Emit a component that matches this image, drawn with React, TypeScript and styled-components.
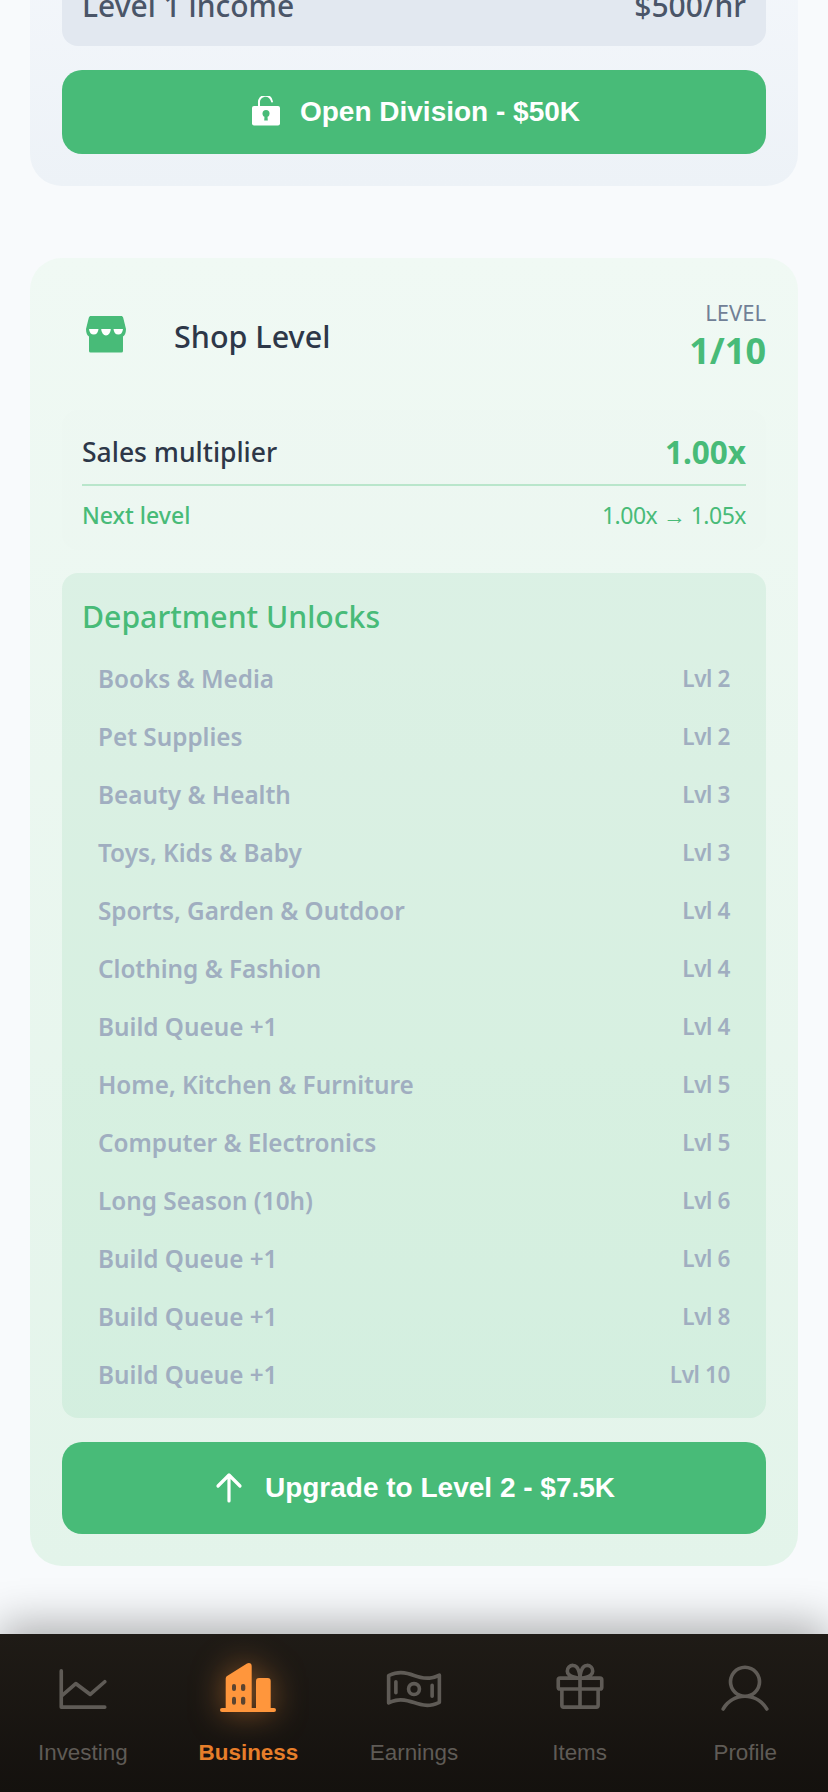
import React from "react";
import styled, { createGlobalStyle } from "styled-components";
import { PiChartLine, PiMoneyWavy, PiGift, PiUser } from "react-icons/pi";

const Global = createGlobalStyle`
  html, body { margin: 0; padding: 0; background: #f8fafc; }
  * { box-sizing: border-box; }
`;

const Screen = styled.div`
  width: 828px;
  height: 1792px;
  overflow: hidden;
  display: flex;
  flex-direction: column;
  font-family: "Noto Sans", sans-serif;
  background: #f8fafc;
`;
const Scroller = styled.main`
  flex: 1;
  min-height: 0;
  overflow: hidden;
  padding: 0 30px;
  display: flex;
  flex-direction: column;
  gap: 72px;
`;
const LockedCard = styled.section`
  margin-top: -100px;
  border-radius: 0 0 32px 32px;
  padding: 0 32px 32px;
  background: linear-gradient(180deg, #f5f8fc, #edf2f7);
`;
const IncomeBox = styled.div`
  height: 146px;
  padding: 0 20px 20px;
  border-radius: 16px;
  background: #e2e8f0;
  display: flex;
  justify-content: space-between;
  align-items: flex-end;
  font-size: 30px;
  font-weight: 500;
  color: #4a5568;
  margin-bottom: 24px;
`;
const ActionButton = styled.button<{ $h: number }>`
  width: 100%;
  height: ${(p) => p.$h}px;
  border: 0;
  border-radius: 20px;
  background: #48bb78;
  color: #fff;
  display: flex;
  align-items: center;
  justify-content: center;
  gap: 20px;
  font-family: "Liberation Sans", Arial, sans-serif;
  font-size: 28px;
  font-weight: 700;
  padding: 0;
`;
const ShopCard = styled.section`
  border-radius: 32px;
  padding: 32px;
  background: linear-gradient(180deg, #f0f9f4, #e3f4ea);
`;
const Header = styled.header`
  display: flex;
  justify-content: space-between;
  align-items: center;
  height: 94px;
  margin-bottom: 26px;
`;
const TitleGroup = styled.div`
  display: flex;
  align-items: center;
  gap: 48px;
  padding-left: 24px;
`;
const StoreIcon = styled.svg`
  margin-bottom: 5px;
`;
const Title = styled.h2`
  margin: 0 0 2px;
  font-size: 30.5px;
  font-weight: 500;
  color: #2d3748;
`;
const LevelBlock = styled.div`
  text-align: right;
`;
const LevelLabel = styled.div`
  font-size: 22px;
  line-height: 26px;
  color: #718096;
`;
const LevelValue = styled.div`
  font-size: 36px;
  line-height: 51px;
  font-weight: 700;
  color: #48bb78;
`;
const Stats = styled.div`
  padding: 21px 20px 19px;
  border-radius: 16px;
  background: rgba(72, 187, 120, 0.008);
  margin-bottom: 23px;
`;
const MultiplierRow = styled.div`
  display: flex;
  justify-content: space-between;
  align-items: center;
  padding-bottom: 11px;
  border-bottom: 2px solid #b9e6cb;
  font-size: 26.5px;
  font-weight: 500;
  color: #2d3748;
`;
const MultiplierValue = styled.span`
  font-size: 31.5px;
  line-height: 42px;
  font-weight: 700;
  color: #48bb78;
`;
const NextRow = styled.div`
  display: flex;
  justify-content: space-between;
  align-items: center;
  padding-top: 13px;
  color: #48bb78;
  font-size: 23px;
`;
const NextLabel = styled.span`
  font-weight: 500;
`;
const NextValue = styled.span`
  letter-spacing: -0.5px;
`;
const Unlocks = styled.div`
  border-radius: 16px;
  padding: 22px 20px 15px;
  background: rgba(72, 187, 120, 0.1);
  margin-bottom: 24px;
`;
const UnlocksTitle = styled.h3`
  margin: 0 0 10px;
  font-size: 30.2px;
  line-height: 44px;
  font-weight: 500;
  color: #48bb78;
`;
const UnlockRow = styled.div`
  height: 58px;
  padding: 0 16px;
  display: flex;
  justify-content: space-between;
  align-items: center;
  font-size: 24.3px;
  font-weight: 600;
  color: #a0aec0;
`;
const UnlockLevel = styled.span`
  font-size: 22.5px;
  letter-spacing: -0.4px;
`;
const Nav = styled.nav`
  position: relative;
  flex: none;
  height: 158px;
  display: grid;
  grid-template-columns: repeat(5, 1fr);
  background: linear-gradient(180deg, #1f1b16, #14110e);
  box-shadow: 0 -10px 40px rgba(0, 0, 0, 0.3);
  padding-top: 25px;
`;
const NavItem = styled.div<{ $active?: boolean }>`
  display: flex;
  flex-direction: column;
  align-items: center;
  gap: 21px;
  font-family: "Liberation Sans", Arial, sans-serif;
  font-size: 22.4px;
  line-height: 26px;
  font-weight: ${(p) => (p.$active ? 700 : 400)};
  color: ${(p) => (p.$active ? "#e67e2a" : "#5f5b56")};
`;
const NavIcon = styled.div<{ $active?: boolean }>`
  height: 60px;
  display: flex;
  align-items: center;
  justify-content: center;
  color: ${(p) => (p.$active ? "#ff963c" : "#5f5b56")};
  filter: ${(p) => (p.$active ? "drop-shadow(0 0 16px rgba(255,150,60,.5))" : "none")};
`;

const Store = () => (
  <StoreIcon width="40" height="37" viewBox="0 0 40 37" aria-hidden>
    <path fill="#48bb78" d="M5 0h30c1.2 0 1.8.7 2.2 1.7L40 13c0 4-1.3 6.5-3 7.5V35a1.6 1.6 0 0 1-1.6 1.6H4.6A1.6 1.6 0 0 1 3 35V20.5C1.3 19.5 0 17 0 13L2.8 1.7C3.2.7 3.8 0 5 0z" />
    <path fill="#fff" d="M3 13h9.5a4.8 6.5 0 0 1-9.5 0zM15.2 13h9.6a4.8 6.5 0 0 1-9.6 0zM27.5 13H37a4.8 6.5 0 0 1-9.5 0z" />
  </StoreIcon>
);

const LockOpen = () => (
  <svg width="32" height="32" viewBox="-4 0 32 32" aria-hidden>
    <path fill="none" stroke="#fff" strokeWidth="2" strokeLinecap="round" d="M7 11V7a6.5 6.5 0 0 1 13-1.5" />
    <rect x="0" y="10" width="28" height="19.5" rx="2" fill="#fff" />
    <circle cx="14" cy="17.5" r="3.5" fill="#48bb78" />
    <path fill="#48bb78" d="M12.7 18h2.6l.5 6.5h-3.6z" />
  </svg>
);

const ArrowUpIcon = () => (
  <svg width="32" height="32" viewBox="0 0 32 32" aria-hidden>
    <path fill="none" stroke="#fff" strokeWidth="3.2" strokeLinecap="round" strokeLinejoin="round" d="M16 3v26M5 14 16 3l11 11" />
  </svg>
);

const Buildings = ({ size }: { size: number }) => (
  <svg width={size} height={size} viewBox="0 0 60 60" fill="currentColor" aria-hidden>
    <rect x="2" y="49" width="56" height="4" rx="2" />
    <path d="M7.7 50V20c0-1.5.6-2.5 1.8-3.2L29 4.6c2.4-1.4 4.7 0 4.7 2.6V50z" />
    <path d="M38 50V22a3 3 0 0 1 3-3h8.7a3 3 0 0 1 3 3v28z" />
    <g fill="#5b4430">
      <rect x="14" y="25" width="4" height="7" rx="2" />
      <rect x="23" y="25" width="4.3" height="7" rx="2" />
      <rect x="14" y="37.7" width="4" height="8" rx="2" />
      <rect x="23" y="37.7" width="4.3" height="8" rx="2" />
    </g>
  </svg>
);

const unlocks: [string, number][] = [
  ["Books & Media", 2],
  ["Pet Supplies", 2],
  ["Beauty & Health", 3],
  ["Toys, Kids & Baby", 3],
  ["Sports, Garden & Outdoor", 4],
  ["Clothing & Fashion", 4],
  ["Build Queue +1", 4],
  ["Home, Kitchen & Furniture", 5],
  ["Computer & Electronics", 5],
  ["Long Season (10h)", 6],
  ["Build Queue +1", 6],
  ["Build Queue +1", 8],
  ["Build Queue +1", 10],
];

const navItems = [
  { label: "Investing", Icon: PiChartLine },
  { label: "Business", Icon: Buildings, active: true },
  { label: "Earnings", Icon: PiMoneyWavy },
  { label: "Items", Icon: PiGift },
  { label: "Profile", Icon: PiUser },
];

export default function App() {
  return (
    <Screen>
      <Global />
      <Scroller>
        <LockedCard>
          <IncomeBox>
            <span>Level 1 income</span>
            <span>$500/hr</span>
          </IncomeBox>
          <ActionButton $h={84}>
            <LockOpen />
            Open Division - $50K
          </ActionButton>
        </LockedCard>
        <ShopCard>
          <Header>
            <TitleGroup>
              <Store />
              <Title>Shop Level</Title>
            </TitleGroup>
            <LevelBlock>
              <LevelLabel>LEVEL</LevelLabel>
              <LevelValue>1/10</LevelValue>
            </LevelBlock>
          </Header>
          <Stats>
            <MultiplierRow>
              <span>Sales multiplier</span>
              <MultiplierValue>1.00x</MultiplierValue>
            </MultiplierRow>
            <NextRow>
              <NextLabel>Next level</NextLabel>
              <NextValue>1.00x → 1.05x</NextValue>
            </NextRow>
          </Stats>
          <Unlocks>
            <UnlocksTitle>Department Unlocks</UnlocksTitle>
            {unlocks.map(([name, lvl], i) => (
              <UnlockRow key={i}>
                <span>{name}</span>
                <UnlockLevel>Lvl {lvl}</UnlockLevel>
              </UnlockRow>
            ))}
          </Unlocks>
          <ActionButton $h={92}>
            <ArrowUpIcon />
            Upgrade to Level 2 - $7.5K
          </ActionButton>
        </ShopCard>
      </Scroller>
      <Nav>
        {navItems.map(({ label, Icon, active }) => (
          <NavItem key={label} $active={active}>
            <NavIcon $active={active}>
              <Icon size={active ? 60 : 58} />
            </NavIcon>
            {label}
          </NavItem>
        ))}
      </Nav>
    </Screen>
  );
}
